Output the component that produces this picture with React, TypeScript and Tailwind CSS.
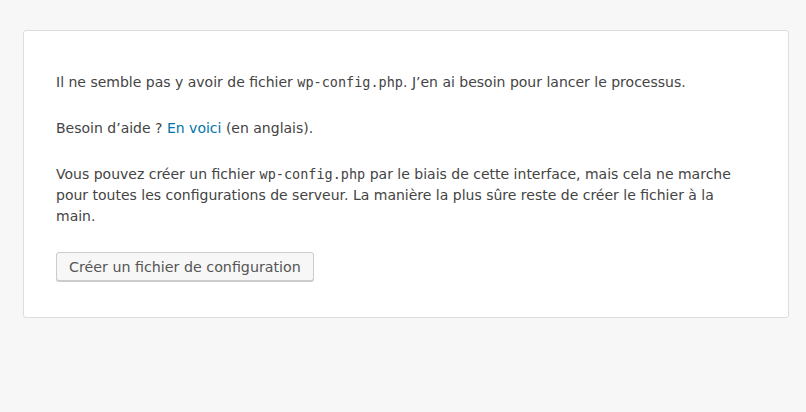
export default function App() {
  return (
    <div className="min-h-[412px] bg-[#f7f7f7] pt-[30px] font-['DejaVu_Sans',sans-serif] text-[14px] leading-[1.5] text-[#444]">
      <div className="ml-[23px] w-[766px] rounded-[3px] border border-[#dddddd] bg-white px-[32px] pt-[41px] pb-[36px]">
        <p>
          Il ne semble pas y avoir de fichier{' '}
          <code className="font-['DejaVu_Sans_Mono',monospace] text-[13.5px]">wp-config.php</code>. J’en ai besoin pour
          lancer le processus.
        </p>
        <p className="mt-[25px]">
          Besoin d’aide ?{' '}
          <a href="#" className="text-[#0073aa]">
            En voici
          </a>{' '}
          (en anglais).
        </p>
        <p className="mt-[25px]">
          Vous pouvez créer un fichier{' '}
          <code className="font-['DejaVu_Sans_Mono',monospace] text-[13.5px]">wp-config.php</code> par le biais de cette
          interface, mais cela ne marche pour toutes les configurations de serveur. La manière la plus sûre reste de
          créer le fichier à la main.
        </p>
        <div className="mt-[25px]">
          <button className="h-[29px] rounded-[3px] border border-[#cccccc] bg-[#f7f7f7] px-[12px] text-[14.25px] leading-[26px] text-[#555] shadow-[0_1px_0_#cccccc]">
            Créer un fichier de configuration
          </button>
        </div>
      </div>
    </div>
  )
}
